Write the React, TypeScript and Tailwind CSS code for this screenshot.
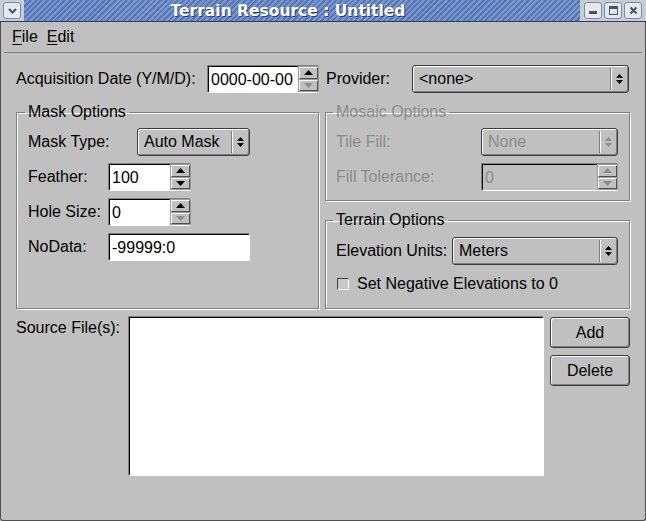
import type { ReactNode } from "react";

const GRAY = "#8c8c8c";

function Tri({ dir, color }: { dir: "up" | "down"; color: string }) {
  return (
    <svg width="9" height="5" viewBox="0 0 9 5">
      {dir === "up" ? <path d="M4.5 0L9 5H0z" fill={color} /> : <path d="M0 0H9L4.5 5z" fill={color} />}
    </svg>
  );
}

function ArrowBtn({ children }: { children: ReactNode }) {
  return (
    <div className="flex flex-1 items-center justify-center border border-t-white border-l-white border-r-[#505050] border-b-[#505050] bg-[#c0c0c0] shadow-[0_0_0_1px_#9a9a9a]">
      {children}
    </div>
  );
}

function Spin({
  value,
  width,
  downOff = false,
  disabled = false,
}: {
  value: string;
  width: string;
  downOff?: boolean;
  disabled?: boolean;
}) {
  const on = disabled ? GRAY : "#000";
  return (
    <div className={`flex h-[28px] ${width} border border-t-[#808080] border-l-[#808080] border-r-white border-b-white`}>
      <div
        className={`flex flex-1 items-center border-t border-l border-black pl-[2px] ${
          disabled ? "bg-[#c0c0c0] text-[#8c8c8c]" : "bg-white text-black"
        }`}
      >
        {value}
      </div>
      <div className="flex w-[20px] flex-col gap-[1px] bg-white py-[1px] pl-[1px]">
        <ArrowBtn>
          <Tri dir="up" color={on} />
        </ArrowBtn>
        <ArrowBtn>
          <Tri dir="down" color={downOff ? GRAY : on} />
        </ArrowBtn>
      </div>
    </div>
  );
}

function Combo({ value, width, disabled = false }: { value: string; width: string; disabled?: boolean }) {
  const c = disabled ? GRAY : "#000";
  return (
    <div
      className={`flex h-[28px] ${width} rounded-[3px] border border-[#3c3c3c] bg-[#c0c0c0] shadow-[inset_1px_1px_0_#fff,inset_-1px_-1px_0_#808080]`}
    >
      <div className={`flex flex-1 items-center pl-[6px] ${disabled ? "text-[#8c8c8c]" : "text-black"}`}>{value}</div>
      <div className="my-[2px] flex w-[18px] flex-col items-center justify-center gap-[2px] border-l border-l-[#808080] shadow-[inset_1px_0_0_#fff]">
        <svg width="7" height="4" viewBox="0 0 7 4">
          <path d="M3.5 0L7 4H0z" fill={c} />
        </svg>
        <svg width="7" height="4" viewBox="0 0 7 4">
          <path d="M0 0H7L3.5 4z" fill={c} />
        </svg>
      </div>
    </div>
  );
}

function Field({ value, width }: { value: string; width: string }) {
  return (
    <div className={`flex h-[28px] ${width} border border-t-[#808080] border-l-[#808080] border-r-white border-b-white`}>
      <div className="flex flex-1 items-center border-t border-l border-black bg-white pl-[2px]">{value}</div>
    </div>
  );
}

function Group({
  title,
  disabled = false,
  className,
  children,
}: {
  title: string;
  disabled?: boolean;
  className: string;
  children: ReactNode;
}) {
  return (
    <fieldset
      className={`border border-[#808080] shadow-[1px_1px_0_#fff,inset_1px_1px_0_#fff] ${className}`}
    >
      <legend className={`-ml-[3px] px-[3px] leading-[18px] ${disabled ? "text-[#8c8c8c]" : "text-black"}`}>
        {title}
      </legend>
      {children}
    </fieldset>
  );
}

function Button({ label }: { label: string }) {
  return (
    <div className="flex h-[31px] items-center justify-center rounded-[3px] border border-[#3c3c3c] bg-[#c0c0c0] shadow-[inset_1px_1px_0_#fff,inset_-1px_-1px_0_#808080]">
      {label}
    </div>
  );
}

function TitleBtn({ children }: { children: ReactNode }) {
  return (
    <div className="flex h-[17px] w-[18px] items-center justify-center rounded-[3px] border border-[#7d8aa6] bg-[#e4e8ef]">
      {children}
    </div>
  );
}

export default function App() {
  return (
    <div className="flex h-[521px] w-[646px] flex-col overflow-hidden bg-[#c0c0c0] font-['Liberation_Sans',Arial,sans-serif] text-[16px] text-black">
      {/* Title bar */}
      <div className="flex h-[22px] border-b border-[#2d3f68]">
        <div className="flex w-[24px] items-center justify-center bg-[#c9ccd4]">
          <TitleBtn>
            <svg width="9" height="6" viewBox="0 0 9 6">
              <path d="M1 1L4.5 4.5L8 1" stroke="#4a5366" strokeWidth="2" fill="none" />
            </svg>
          </TitleBtn>
        </div>
        <div className="flex flex-1 items-center justify-center bg-[repeating-linear-gradient(135deg,#5877b6_0px,#5877b6_2px,#7a96cc_2px,#7a96cc_4px)] pr-[28px]">
          <span className="font-['DejaVu_Sans',sans-serif] text-[15.5px] font-bold leading-[20px] text-white [text-shadow:1px_1px_0_#2d3f68]">
            Terrain Resource : Untitled
          </span>
        </div>
        <div className="flex w-[66px] items-center justify-center gap-[2px] bg-[#c9ccd4]">
          <TitleBtn>
            <div className="mt-[4px] h-[3px] w-[8px] bg-[#4a5366]" />
          </TitleBtn>
          <TitleBtn>
            <div className="h-[9px] w-[9px] border-[1.5px] border-t-[3px] border-[#4a5366]" />
          </TitleBtn>
          <TitleBtn>
            <svg width="9" height="9" viewBox="0 0 9 9">
              <path d="M1.5 1.5L7.5 7.5M7.5 1.5L1.5 7.5" stroke="#4a5366" strokeWidth="2" />
            </svg>
          </TitleBtn>
        </div>
      </div>

      <div className="flex flex-1 flex-col rounded-b-[3px] border-x border-b border-[#505050]">
        {/* Menu */}
        <div className="flex h-[30px] items-center gap-[9px] pl-[11px]">
          <span>
            <span className="underline underline-offset-2">F</span>ile
          </span>
          <span>
            <span className="underline underline-offset-2">E</span>dit
          </span>
        </div>
        <div className="mx-[3px] border-t border-[#808080]" />

        <div className="flex flex-col px-[15px] pt-[12px]">
          <div className="flex gap-[6px]">
            {/* Left column */}
            <div className="flex w-[303px] flex-col">
              <div className="flex h-[28px] items-center justify-between">
                <span>Acquisition Date (Y/M/D):</span>
                <Spin value="0000-00-00" width="w-[112px]" downOff />
              </div>
              <Group title="Mask Options" className="mt-[10px] h-[206px] pl-[11px] pt-[7px]">
                <div className="flex flex-col gap-[7px]">
                  <div className="flex items-center">
                    <span className="w-[109px]">Mask Type:</span>
                    <Combo value="Auto Mask" width="w-[113px]" />
                  </div>
                  <div className="flex items-center">
                    <span className="w-[80px]">Feather:</span>
                    <Spin value="100" width="w-[83px]" />
                  </div>
                  <div className="flex items-center">
                    <span className="w-[80px]">Hole Size:</span>
                    <Spin value="0" width="w-[83px]" downOff />
                  </div>
                  <div className="flex items-center">
                    <span className="w-[80px]">NoData:</span>
                    <Field value="-99999:0" width="w-[142px]" />
                  </div>
                </div>
              </Group>
            </div>

            {/* Right column */}
            <div className="flex w-[305px] flex-col">
              <div className="flex h-[28px] items-center justify-between pl-[1px] pr-[1px]">
                <span>Provider:</span>
                <Combo value="<none>" width="w-[217px]" />
              </div>
              <Group title="Mosaic Options" disabled className="mt-[10px] h-[98px] pl-[10px] pr-[11px] pt-[7px]">
                <div className="flex flex-col gap-[7px] text-[#8c8c8c]">
                  <div className="flex items-center justify-between">
                    <span>Tile Fill:</span>
                    <Combo value="None" width="w-[137px]" disabled />
                  </div>
                  <div className="flex items-center justify-between">
                    <span>Fill Tolerance:</span>
                    <Spin value="0" width="w-[137px]" disabled />
                  </div>
                </div>
              </Group>
              <Group title="Terrain Options" className="mt-[10px] h-[98px] pl-[10px] pr-[11px] pt-[8px]">
                <div className="flex items-center justify-between">
                  <span>Elevation Units:</span>
                  <Combo value="Meters" width="w-[166px]" />
                </div>
                <div className="mt-[10px] flex h-[18px] items-center gap-[8px] pl-[1px]">
                  <div className="h-[12px] w-[12px] border border-t-[#404040] border-l-[#404040] border-r-white border-b-white bg-[#c8c8c8]" />
                  <span>Set Negative Elevations to 0</span>
                </div>
              </Group>
            </div>
          </div>

          {/* Source files */}
          <div className="mt-[7px] flex">
            <span className="w-[112px] pt-[1px] leading-[22px]">Source File(s):</span>
            <div className="h-[160px] w-[416px] border border-t-[#808080] border-l-[#808080] border-r-white border-b-white">
              <div className="h-full border-t border-l border-black bg-white" />
            </div>
            <div className="ml-[6px] flex w-[80px] flex-col gap-[7px] pt-[1px]">
              <Button label="Add" />
              <Button label="Delete" />
            </div>
          </div>
        </div>
      </div>
    </div>
  );
}
